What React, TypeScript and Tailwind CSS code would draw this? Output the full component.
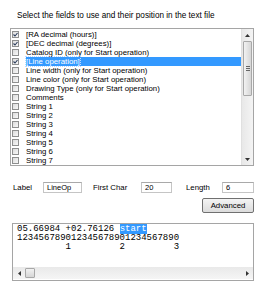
import React from 'react';

const fields = [
  { name: '[RA decimal (hours)]', checked: true },
  { name: '[DEC decimal (degrees)]', checked: true },
  { name: 'Catalog ID (only for Start operation)', checked: false },
  { name: '[Line operation]', checked: true, selected: true },
  { name: 'Line width (only for Start operation)', checked: false },
  { name: 'Line color (only for Start operation)', checked: false },
  { name: 'Drawing Type (only for Start operation)', checked: false },
  { name: 'Comments', checked: false },
  { name: 'String 1', checked: false },
  { name: 'String 2', checked: false },
  { name: 'String 3', checked: false },
  { name: 'String 4', checked: false },
  { name: 'String 5', checked: false },
  { name: 'String 6', checked: false },
  { name: 'String 7', checked: false },
];

const Check = ({ on }: { on: boolean }) => (
  <div className="w-[7px] h-[7px] border border-[#8e8f8f] bg-gradient-to-br from-[#dcdcdc] to-[#f8f8f8] flex items-center justify-center shrink-0">
    {on && (
      <svg width="5" height="5" viewBox="0 0 5 5">
        <path d="M0.5 2.5 L2 4 L4.5 1" stroke="#2a3b5a" strokeWidth="1.1" fill="none" />
      </svg>
    )}
  </div>
);

const TextBox = ({ value, w }: { value: string; w: string }) => (
  <div className={`${w} h-[11px] border border-[#c5c5c5] border-t-[#a9a9a9] bg-white pl-[3px] leading-[9px] text-[7.5px] text-black`}>
    {value}
  </div>
);

export default function App() {
  return (
    <div className="w-[267px] h-[301px] bg-white pl-[10px] pr-[13px] pt-[10px] text-black font-['Liberation_Sans',sans-serif] text-[8px] overflow-hidden">
      <div className="h-[12px] leading-[12px] pl-[7px] text-[8.2px]">
        Select the fields to use and their position in the text file
      </div>

      {/* field list */}
      <div className="mt-[6px] h-[138px] border border-[#a5a5a5] flex">
        <div className="flex-1 pt-[1px] pl-[1px] overflow-hidden">
          {fields.map((f) => (
            <div key={f.name} className="h-[9px] flex items-center">
              <Check on={f.checked} />
              <div
                className={`ml-[7px] h-[9px] leading-[9px] text-[7.8px] whitespace-nowrap ${
                  f.selected ? 'flex-1 bg-[#3399ff] text-white' : 'text-black'
                }`}
              >
                <span className={f.selected ? 'outline outline-1 outline-dotted outline-[#bcd8ff]' : ''}>{f.name}</span>
              </div>
            </div>
          ))}
        </div>
        <div className="w-[12px] bg-gradient-to-r from-[#e8e8e8] to-[#f4f4f4] border-l border-[#e0e0e0] flex flex-col items-center">
          <div className="h-[12px] flex items-center justify-center">
            <svg width="5" height="3" viewBox="0 0 5 3"><path d="M0 3 L2.5 0 L5 3Z" fill="#333" /></svg>
          </div>
          <div className="w-[9px] h-[55px] rounded-[1px] border border-[#a8a8a8] bg-gradient-to-r from-[#f2f2f2] to-[#d6d6d6] flex items-center justify-center">
            <div className="flex flex-col gap-[1px]">
              <div className="w-[4px] h-px bg-[#666]" />
              <div className="w-[4px] h-px bg-[#666]" />
              <div className="w-[4px] h-px bg-[#666]" />
            </div>
          </div>
          <div className="flex-1" />
          <div className="h-[12px] flex items-center justify-center">
            <svg width="5" height="3" viewBox="0 0 5 3"><path d="M0 0 L2.5 3 L5 0Z" fill="#333" /></svg>
          </div>
        </div>
      </div>

      {/* label / first char / length */}
      <div className="mt-[16px] flex items-center h-[11px] text-[7.8px]">
        <span className="ml-[3px] w-[30px]">Label</span>
        <TextBox value="LineOp" w="w-[39px]" />
        <span className="ml-[11px] w-[48px]">First Char</span>
        <TextBox value="20" w="w-[31px]" />
        <span className="ml-[14px] w-[36px]">Length</span>
        <TextBox value="6" w="w-[32px]" />
      </div>

      <div className="mt-[5px] flex justify-end">
        <div className="w-[52px] h-[15px] rounded-[2px] border border-[#707070] bg-gradient-to-b from-[#f4f4f4] to-[#dcdcdc] flex items-center justify-center text-[7.8px]">
          Advanced
        </div>
      </div>

      {/* preview */}
      <div className="mt-[10px] ml-[2px] h-[58px] border border-[#a5a5a5] flex flex-col">
        <div className="flex-1 pl-[4px] pt-[1px] font-['Liberation_Mono',monospace] text-[9px] leading-[9px] whitespace-pre text-black">
          <div>
            05.66984 +02.76126 <span className="bg-[#3399ff] text-white">start</span>
          </div>
          <div>123456789012345678901234567890</div>
          <div>{'         1         2         3'}</div>
        </div>
        <div className="h-[12px] mb-[1px] bg-gradient-to-b from-[#e9e9e9] to-[#f5f5f5] flex items-center">
          <div className="w-[12px] flex items-center justify-center">
            <svg width="3" height="5" viewBox="0 0 3 5"><path d="M3 0 L0 2.5 L3 5Z" fill="#333" /></svg>
          </div>
          <div className="w-[10px] h-[10px] rounded-[1px] border border-[#a8a8a8] bg-gradient-to-b from-[#f2f2f2] to-[#d6d6d6]" />
          <div className="flex-1" />
          <div className="w-[12px] flex items-center justify-center">
            <svg width="3" height="5" viewBox="0 0 3 5"><path d="M0 0 L3 2.5 L0 5Z" fill="#333" /></svg>
          </div>
        </div>
      </div>
    </div>
  );
}
